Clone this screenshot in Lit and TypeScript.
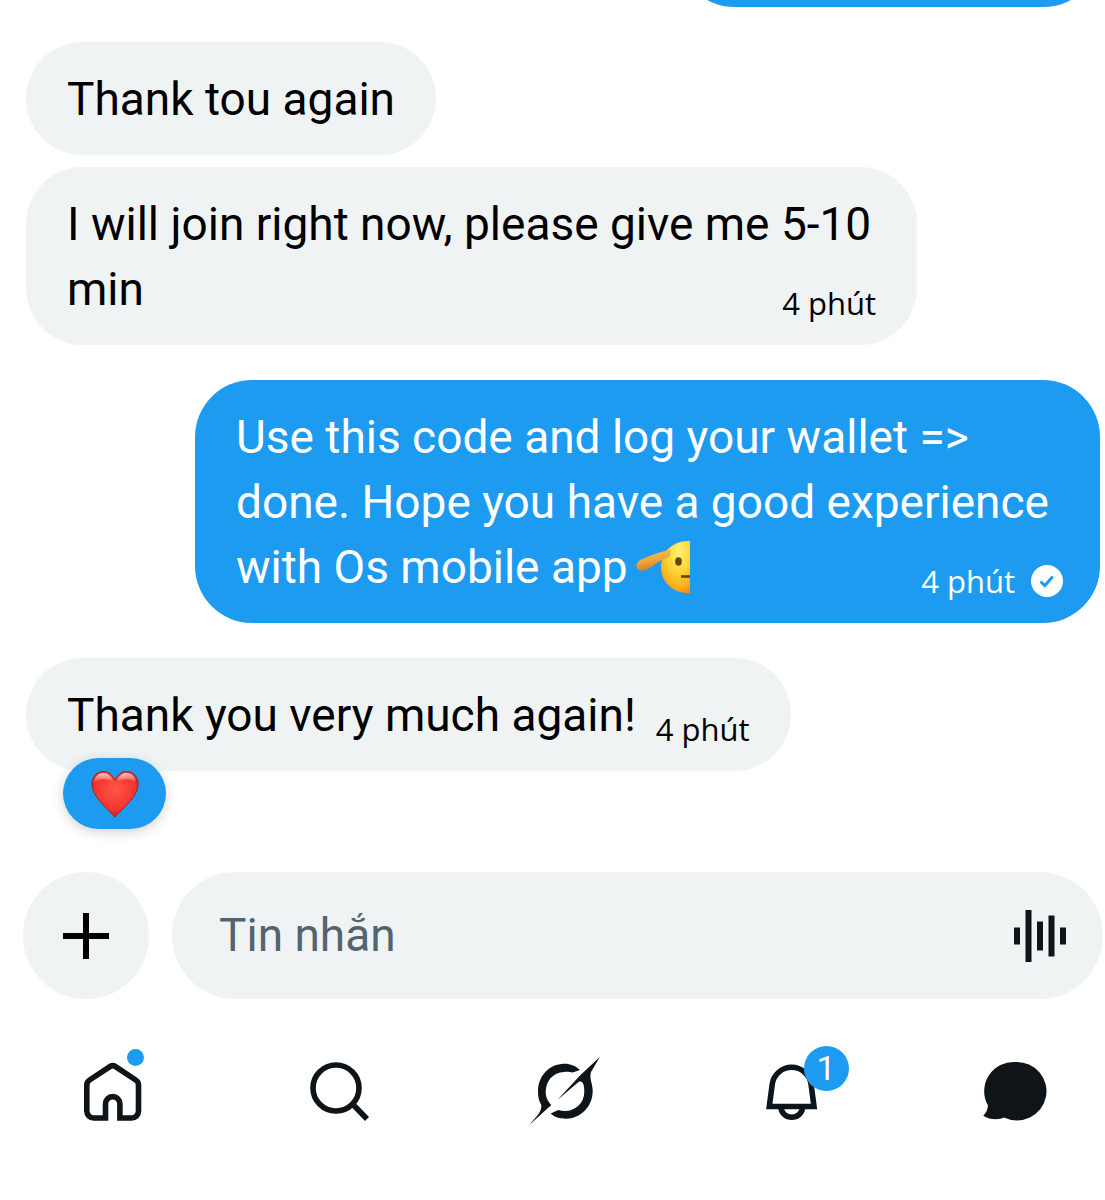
import { LitElement, html, css, svg, nothing } from 'lit';
import { customElement, property } from 'lit/decorators.js';
import { classMap } from 'lit/directives/class-map.js';

const salute = html`<svg class="salute" viewBox="0 0 54 54" width="54" height="54" role="img" aria-label="🫡">
    <defs>
      <radialGradient id="face" cx="0.62" cy="0.2" r="0.85">
        <stop offset="0" stop-color="#fff27a" />
        <stop offset="0.45" stop-color="#fdd835" />
        <stop offset="0.8" stop-color="#fbb01c" />
        <stop offset="1" stop-color="#f18a16" />
      </radialGradient>
      <linearGradient id="finger" x1="0" y1="0" x2="0.3" y2="1">
        <stop offset="0" stop-color="#fbc84a" />
        <stop offset="0.6" stop-color="#eea33a" />
        <stop offset="1" stop-color="#d07f1e" />
      </linearGradient>
    </defs>
    <path d="M54 1C37 0 25 12 25 27s12 27 29 26Z" fill="url(#face)" />
    <ellipse cx="42.5" cy="21.5" rx="3.3" ry="4.3" fill="#6b430c" />
    <path d="M45 36.5H54" stroke="#70430b" stroke-width="2.6" />
    <path
      d="M35 10C28 10.500 18 14 8 18.500C3 19.500 0 23.500 .5 26.500C1 31 7 32 11 29.500C18 26 21 21 34 16.500Z"
      fill="url(#finger)"
    />
  </svg>`;

const heart = html`
  <svg viewBox="0 0 48 48" width="48" height="48" aria-hidden="true">
    <defs>
      <radialGradient id="heart" cx="0.5" cy="0.4" r="0.65">
        <stop offset="0" stop-color="#ff5648" />
        <stop offset="0.65" stop-color="#f5362e" />
        <stop offset="1" stop-color="#bd1a1c" />
      </radialGradient>
      <linearGradient id="shine" x1="0" y1="0" x2="0" y2="1">
        <stop offset="0" stop-color="#fff" stop-opacity="0.75" />
        <stop offset="1" stop-color="#fff" stop-opacity="0" />
      </linearGradient>
    </defs>
    <path
      d="M24 10.500C21 4 17 1.500 12.500 1.500C5.500 1.500 1 7 1 14C1 26 13 35 24 47C35 35 47 26 47 14C47 7 42.500 1.500 35.500 1.500C31 1.500 27 4 24 10.500Z"
      fill="url(#heart)"
      stroke="#a81c20"
    />
    <path d="M3 13C3 6 8 3 12.500 3C17 3 20 6 22 11C16 8 8 8 3 13Z" fill="url(#shine)" />
    <path d="M45 13C45 6 40 3 35.500 3C31 3 28 6 26 11C32 8 40 8 45 13Z" fill="url(#shine)" />
  </svg>
`;

const plusIcon = html`
  <svg viewBox="0 0 46 46" width="46" height="46" aria-hidden="true">
    <path d="M23 0V46M0 23H46" stroke="#000" stroke-width="6" />
  </svg>
`;

const voiceIcon = html`
  <svg viewBox="0 0 52 52" width="52" height="52" aria-hidden="true">
    <path
      d="M3 17.500V34.500M14.500 0V52M26 11.500V40.500M37.500 5.500V46.500M49 17.500V34.500"
      stroke="#0f1419"
      stroke-width="6"
    />
  </svg>
`;

const icons = {
  home: svg`<path class="line" d="M24.500 59V44.800a7.200 7.200 0 0 1 14.400 0V59H50.500a7 7 0 0 0 7-7V26a6 6 0 0 0-2.800-5L34.500 7.600a5 5 0 0 0-5.600 0L8.600 21a6 6 0 0 0-2.800 5V52a7 7 0 0 0 7 7Z" />`,
  search: svg`<circle class="line" cx="29" cy="29" r="23" /><path class="line" d="M45.500 45L60 60" />`,
  grok: svg`
    <path d="M48 11L40.700 13.500C38 12.800 35 12.500 32 13C21 13.500 13.700 22 13.700 33C13.700 38.500 16 42.500 19.300 46L-2.700 66C5 57 9.800 53 9.300 46C7 42 6 38 6 32.700C6 17 17 5 32 4.700C38 4.500 44 7 48 11Z" />
    <path d="M68 -2.300L59 13C57 20 60.700 24 60.700 32C60.700 48 48 60 33.500 59.700C28 59.700 22 58 18.700 54.500L26.300 51C40 55 52.300 46 52.300 32.700C52.300 26 51 21 46.500 23L25.300 41L48 16.500Z" />
  `,
  bell: svg`
    <path class="line" d="M11.300 47.500L14.200 25.500a19.600 19.600 0 0 1 38.900 0L56 47.500Z" />
    <path class="line" d="M23 49a10.800 10.200 0 0 0 21.500 0" />
  `,
  chat: svg`<path d="M33 3a29.500 29.200 0 1 1-12 55.400C17 60.500 7 61.500 .3 56.700C3.500 53.500 4.500 50.500 5 46.500A29.500 29.200 0 0 1 33 3Z" />`,
};

@customElement('dm-bubble')
export class DmBubble extends LitElement {
  @property({ type: Boolean, reflect: true }) outgoing = false;
  @property() time = '';
  @property({ type: Boolean }) reaction = false;

  static styles = css`
    :host {
      display: block;
      position: relative;
      box-sizing: border-box;
      max-width: calc(100% - 183px);
      padding: 25px 41px 23px;
      border-radius: 57px;
      background: #eff3f4;
      color: #000;
      font-size: 46px;
      line-height: 65px;
    }

    :host([outgoing]) {
      align-self: flex-end;
      max-width: calc(100% - 169px);
      padding-right: 37px;
      background: #1d9bf0;
      color: #fff;
    }

    .meta {
      float: right;
      display: flex;
      align-items: center;
      gap: 16px;
      margin: 27px 0 0 20px;
      font-family: 'Open Sans', 'Noto Sans', sans-serif;
      font-size: 31px;
      line-height: 38px;
    }

    .reaction {
      position: absolute;
      left: 37px;
      bottom: -58px;
      display: flex;
      align-items: center;
      justify-content: center;
      width: 103px;
      height: 71px;
      padding: 0;
      border: 0;
      border-radius: 36px;
      background: #1d9bf0;
      box-shadow: 0 3px 12px rgba(60, 20, 20, 0.2);
    }
  `;

  render() {
    return html`
      <slot></slot>${this.time
        ? html`<span class="meta">
            <time>${this.time}</time>
            ${this.outgoing
              ? html`<svg viewBox="0 0 32 32" width="32" height="32" aria-hidden="true">
                  <circle cx="16" cy="16" r="16" fill="#fff" />
                  <path d="M9.500 16.500L13.800 20.500L21.800 11.500" fill="none" stroke="#1d9bf0" stroke-width="3" />
                </svg>`
              : nothing}
          </span>`
        : nothing}
      ${this.reaction ? html`<button class="reaction" aria-label="❤️">${heart}</button>` : nothing}
    `;
  }
}

@customElement('app-root')
export class AppRoot extends LitElement {
  static styles = css`
    :host {
      display: block;
      min-height: 100vh;
      background: #fff;
      font-family: Roboto, 'Liberation Sans', sans-serif;
    }

    .thread {
      display: flex;
      flex-direction: column;
      align-items: flex-start;
      gap: 35px;
      padding: 0 5px 101px 26px;
    }

    /* tail end of the message scrolled off the top */
    .scrolled {
      display: flex;
      align-items: flex-end;
      align-self: flex-end;
      height: 7px;
      overflow: hidden;
    }

    .scrolled-bubble {
      flex: none;
      width: 422px;
      height: 113px;
      border-radius: 57px;
      background: #1d9bf0;
    }

    .group {
      display: flex;
      flex-direction: column;
      align-items: flex-start;
      gap: 12px;
      width: 100%;
    }

    .salute {
      margin-left: 8px;
      vertical-align: -11px;
    }

    .composer {
      display: flex;
      gap: 23px;
      padding: 0 2px 0 23px;
    }

    button {
      padding: 0;
      border: 0;
      background: none;
    }

    .add {
      display: flex;
      flex: none;
      align-items: center;
      justify-content: center;
      width: 126px;
      height: 127px;
      border-radius: 50%;
      background: #eff3f4;
    }

    .field {
      display: flex;
      flex: 1;
      align-items: center;
      min-width: 0;
      padding: 0 37px 0 47px;
      border-radius: 64px;
      background: #eff3f4;
    }

    .field input {
      flex: 1;
      min-width: 0;
      padding: 0;
      border: 0;
      outline: 0;
      background: none;
      color: #0f1419;
      font: inherit;
      font-size: 46px;
      line-height: 65px;
    }

    .field input::placeholder {
      color: #536471;
      opacity: 1;
    }

    .voice {
      display: flex;
    }

    nav {
      display: flex;
      justify-content: space-between;
      padding: 60px 58px 76px 81px;
    }

    .tab {
      position: relative;
      display: block;
      width: 64px;
      height: 64px;
      color: #0f1419;
      text-decoration: none;
    }

    .tab svg {
      display: block;
      overflow: visible;
      fill: currentColor;
    }

    .line {
      fill: none;
      stroke: currentColor;
      stroke-width: 5.6;
    }

    .dot {
      position: absolute;
      top: -10px;
      right: 1px;
      width: 17px;
      height: 17px;
      border-radius: 50%;
      background: #1d9bf0;
    }

    .count {
      position: absolute;
      top: -13px;
      left: 46px;
      width: 45px;
      height: 45px;
      border-radius: 50%;
      background: #1d9bf0;
      color: #fff;
      font-size: 34px;
      line-height: 45px;
      text-align: center;
    }
  `;

  private tabs = [
    { id: 'home', label: 'Home', dot: true },
    { id: 'search', label: 'Search' },
    { id: 'grok', label: 'Grok' },
    { id: 'bell', label: 'Notifications', count: 1 },
    { id: 'chat', label: 'Messages', active: true },
  ];

  render() {
    return html`
      <main class="thread">
        <div class="scrolled"><div class="scrolled-bubble"></div></div>
        <div class="group">
          <dm-bubble>Thank tou again</dm-bubble>
          <dm-bubble time="4 phút">I will join right now, please give me 5-10 min</dm-bubble>
        </div>
        <dm-bubble outgoing time="4 phút"
          >Use this code and log your wallet =&gt; done. Hope you have a good experience with Os mobile
          app${salute}</dm-bubble
        >
        <dm-bubble time="4 phút" reaction>Thank you very much again!</dm-bubble>
      </main>
      <form class="composer" @submit=${(e: Event) => e.preventDefault()}>
        <button class="add" type="button" aria-label="Add">${plusIcon}</button>
        <div class="field">
          <input type="text" placeholder="Tin nhắn" aria-label="Tin nhắn" />
          <button class="voice" type="button" aria-label="Voice">${voiceIcon}</button>
        </div>
      </form>
      <nav>
        ${this.tabs.map(
          (tab) => html`
            <a class=${classMap({ tab: true, active: !!tab.active })} href="#${tab.id}" aria-label=${tab.label}>
              <svg viewBox="0 0 64 64" width="64" height="64" aria-hidden="true">${icons[tab.id]}</svg>
              ${tab.dot ? html`<span class="dot"></span>` : nothing}
              ${tab.count ? html`<span class="count">${tab.count}</span>` : nothing}
            </a>
          `
        )}
      </nav>
    `;
  }
}
